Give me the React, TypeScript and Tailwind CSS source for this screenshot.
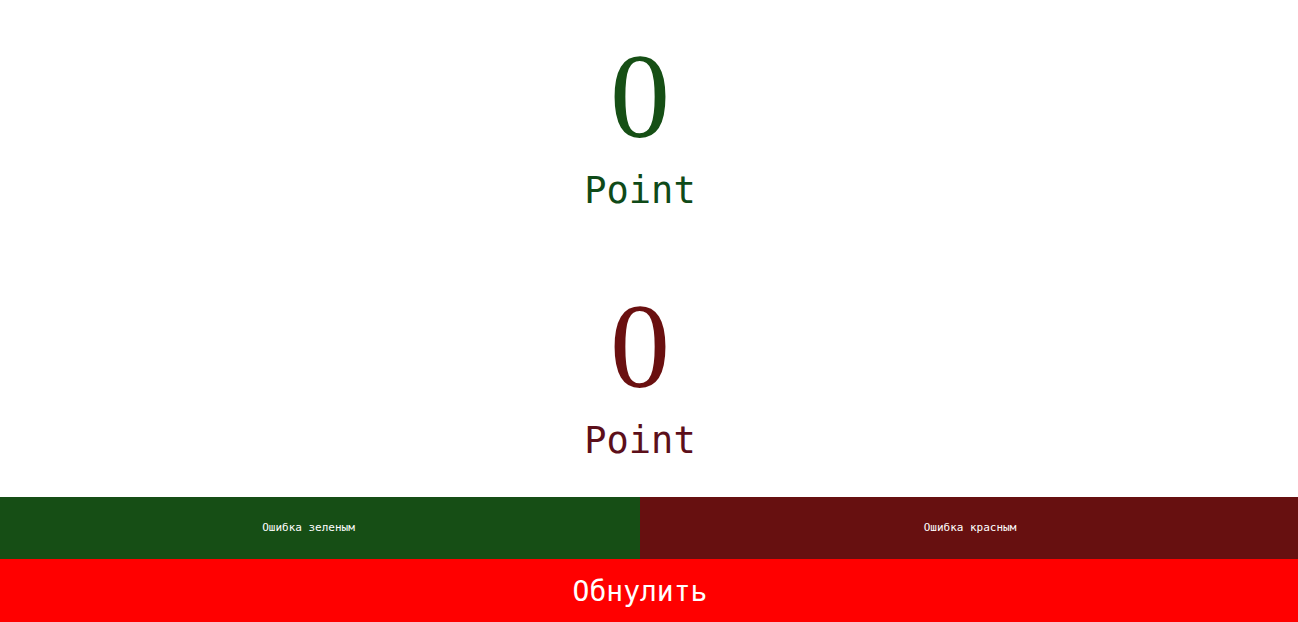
import React from "react";

export default function App() {
  return (
    <div className="w-full min-h-[622px] bg-white flex flex-col">
      <div className="flex flex-col items-center pr-[18px] pt-[37px]">
        <div className="flex flex-col items-center">
          <div className="font-['Liberation_Serif',serif] text-[120px] leading-none text-[#164f15]">0</div>
          <div className="font-['DejaVu_Sans_Mono',monospace] mt-[15px] text-[37px] leading-none text-[#0f4a18]">Point</div>
        </div>
        <div className="flex flex-col items-center mt-[78px]">
          <div className="font-['Liberation_Serif',serif] text-[120px] leading-none text-[#6a1010]">0</div>
          <div className="font-['DejaVu_Sans_Mono',monospace] mt-[15px] text-[37px] leading-none text-[#5c0f1a]">Point</div>
        </div>
      </div>
      <div className="mt-[38px] flex h-[62px]">
        <button className="font-['DejaVu_Sans_Mono',monospace] w-[640px] h-full bg-[#164e15] text-white text-[11px] pr-[23px] flex items-center justify-center">Ошибка зеленым</button>
        <button className="font-['DejaVu_Sans_Mono',monospace] flex-1 h-full bg-[#671010] text-white text-[11px] pl-[2px] flex items-center justify-center">Ошибка красным</button>
      </div>
      <button className="font-['DejaVu_Sans_Mono',monospace] w-full h-[63px] bg-[#ff0000] text-white text-[28px] pr-[18px] pt-[2px] flex items-center justify-center">Обнулить</button>
    </div>
  );
}
